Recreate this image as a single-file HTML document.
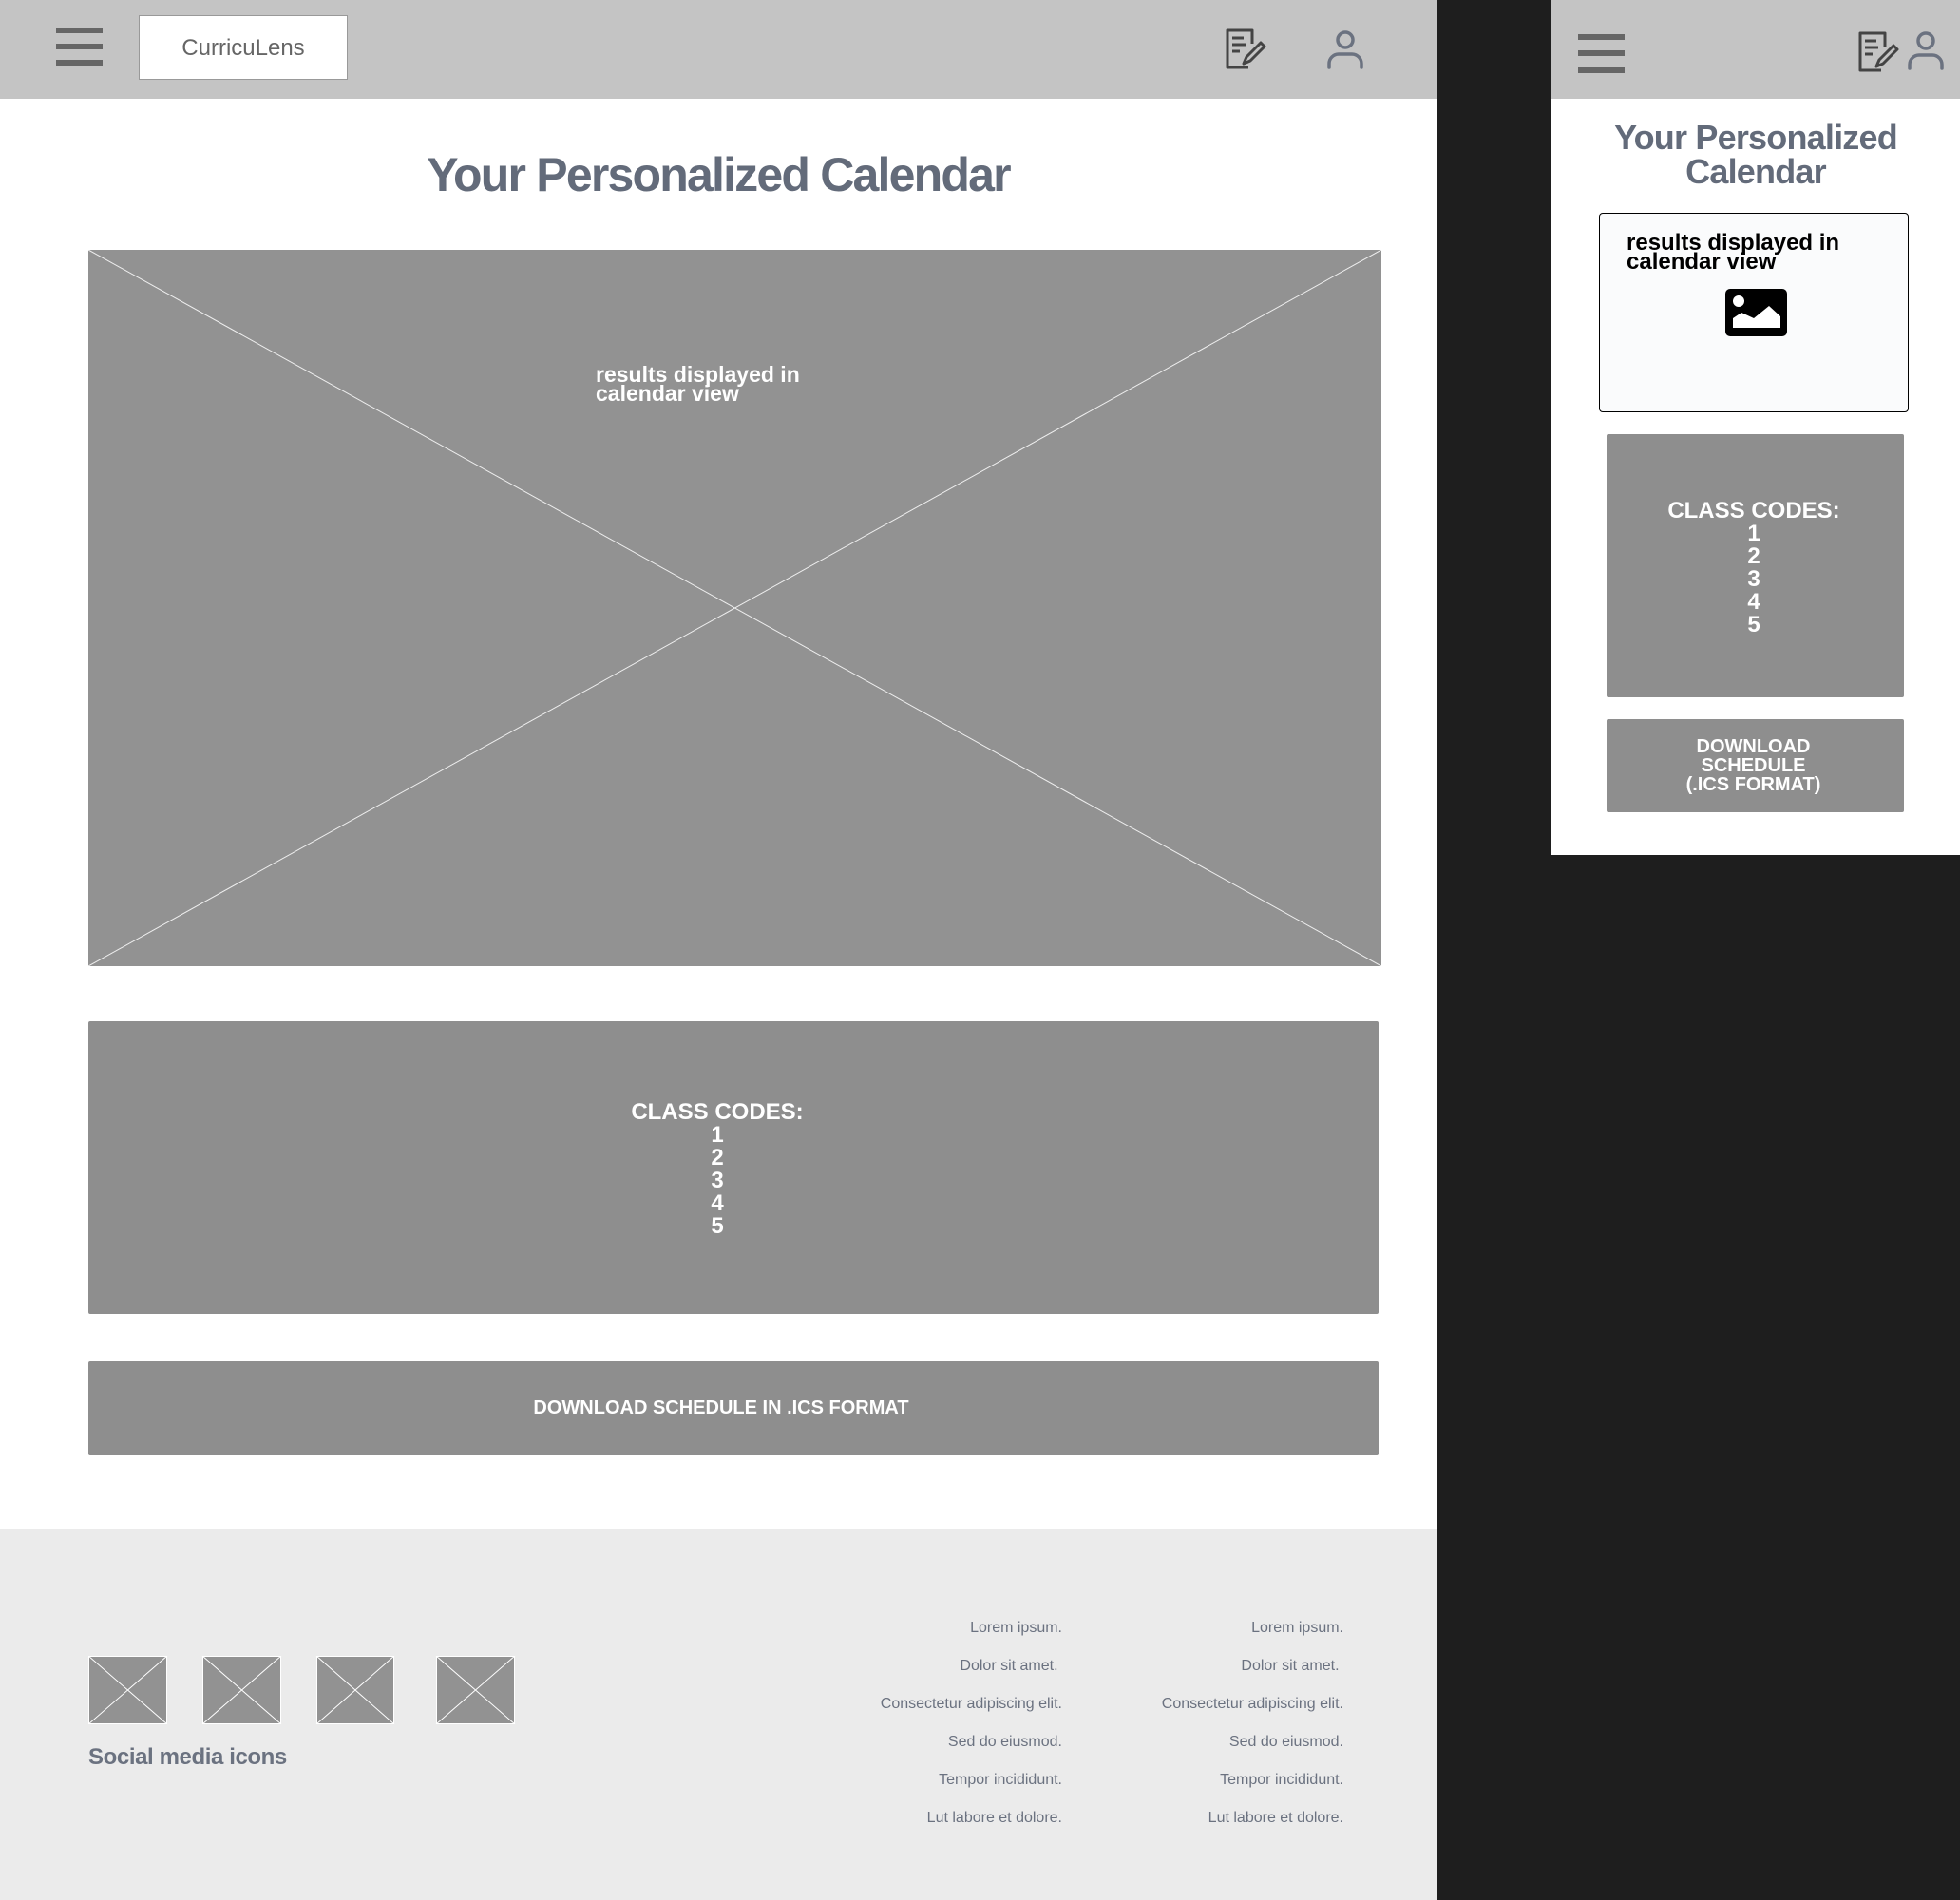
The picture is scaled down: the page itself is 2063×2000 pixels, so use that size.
<!DOCTYPE html>
<html><head><meta charset="utf-8"><style>
*{margin:0;padding:0;box-sizing:border-box}
body{width:2063px;height:2000px;position:relative;background:#1e1e1e;font-family:"Liberation Sans",sans-serif;overflow:hidden}
.a{position:absolute}
.hb span{position:absolute;left:0;width:100%;height:6px;background:#666}
.b{font-weight:bold}
.fl{position:absolute;font-size:16px;color:#6b7280;text-align:right;white-space:nowrap}
</style></head><body>
<div class="a" style="left:0;top:0;width:1512px;height:1609px;background:#fff"></div>
<div class="a" style="left:0;top:0;width:1512px;height:104px;background:#c4c4c4"></div>
<div class="a hb" style="left:59px;top:29px;width:49px;height:40px"><span style="top:0"></span><span style="top:17px"></span><span style="top:34px"></span></div>
<div class="a" style="left:146px;top:16px;width:220px;height:68px;background:#fff;border:1px solid #999;font-size:24px;color:#666;text-align:center;line-height:68px">CurricuLens</div>
<svg class="a" style="left:1287px;top:29px" width="46" height="46" viewBox="0 0 46 46"><path d="M27 42H5V3h26v14" fill="none" stroke="#444" stroke-width="3" stroke-linejoin="round"/><path d="M10 11h12M10 18h14M10 25h8" stroke="#444" stroke-width="3"/><path d="M22 38l3-7 15-15 4 4-15 15z" fill="none" stroke="#444" stroke-width="3" stroke-linejoin="round"/></svg>
<svg class="a" style="left:1396px;top:30px" width="40" height="44" viewBox="0 0 40 44"><circle cx="20" cy="12" r="8" fill="none" stroke="#6b7280" stroke-width="3.5"/><path d="M3 41v-4a10 10 0 0 1 10-10h14a10 10 0 0 1 10 10v4" fill="none" stroke="#6b7280" stroke-width="3.5" stroke-linecap="round"/></svg>
<div class="a b" style="left:0;width:1512px;top:155px;text-align:center;font-size:50px;color:#636b7a;letter-spacing:-1.8px">Your Personalized Calendar</div>
<svg class="a" style="left:93px;top:263px" width="1361" height="754"><rect width="1361" height="754" fill="#929292"/><line x1="0" y1="0" x2="1361" y2="754" stroke="#eee" stroke-width="1"/><line x1="1361" y1="0" x2="0" y2="754" stroke="#eee" stroke-width="1"/></svg>
<div class="a b" style="left:627px;top:384px;font-size:23px;line-height:20px;color:#fff">results displayed in<br>calendar view</div>
<div class="a" style="left:93px;top:1075px;width:1358px;height:308px;background:#8e8e8e;border-radius:2px"></div>
<div class="a b" style="left:93px;width:1324px;top:1159px;text-align:center;font-size:24px;line-height:24px;color:#fff">CLASS CODES:<br>1<br>2<br>3<br>4<br>5</div>
<div class="a b" style="left:93px;top:1433px;width:1358px;height:99px;background:#8e8e8e;border-radius:2px;color:#fff;font-size:20px;line-height:99px;text-align:center;padding-right:26px">DOWNLOAD SCHEDULE IN .ICS FORMAT</div>
<div class="a" style="left:0;top:1609px;width:1512px;height:391px;background:#ebebeb"></div>
<svg class="a" style="left:93px;top:1743px" width="450" height="72">
<g fill="#929292" stroke="#fff" stroke-width="1">
<rect x="0.5" y="0.5" width="82" height="71"/><path d="M0 0L83 72M83 0L0 72"/>
<rect x="120.5" y="0.5" width="82" height="71"/><path d="M120 0L203 72M203 0L120 72"/>
<rect x="240.5" y="0.5" width="81" height="71"/><path d="M240 0L322 72M322 0L240 72"/>
<rect x="366.5" y="0.5" width="82" height="71"/><path d="M366 0L449 72M449 0L366 72"/>
</g></svg>
<div class="a b" style="left:93px;top:1836px;font-size:24px;color:#6b7280;letter-spacing:-0.4px">Social media icons</div>
<div class="fl" style="right:945px;top:1694px;line-height:40px">Lorem ipsum.<br>Dolor sit amet.&nbsp;<br>Consectetur adipiscing elit.<br>Sed do eiusmod.<br>Tempor incididunt.<br>Lut labore et dolore.</div>
<div class="fl" style="right:649px;top:1694px;line-height:40px">Lorem ipsum.<br>Dolor sit amet.&nbsp;<br>Consectetur adipiscing elit.<br>Sed do eiusmod.<br>Tempor incididunt.<br>Lut labore et dolore.</div>
<div class="a" style="left:1633px;top:0;width:430px;height:900px;background:#fff"></div>
<div class="a" style="left:1633px;top:0;width:430px;height:104px;background:#c4c4c4"></div>
<div class="a hb" style="left:1661px;top:36px;width:49px;height:41px"><span style="top:0"></span><span style="top:17px"></span><span style="top:35px"></span></div>
<svg class="a" style="left:1953px;top:32px" width="46" height="46" viewBox="0 0 46 46"><path d="M27 42H5V3h26v14" fill="none" stroke="#444" stroke-width="3" stroke-linejoin="round"/><path d="M10 11h12M10 18h14M10 25h8" stroke="#444" stroke-width="3"/><path d="M22 38l3-7 15-15 4 4-15 15z" fill="none" stroke="#444" stroke-width="3" stroke-linejoin="round"/></svg>
<svg class="a" style="left:2007px;top:32px" width="40" height="44" viewBox="0 0 40 44"><circle cx="20" cy="11" r="8" fill="none" stroke="#6b7280" stroke-width="3.5"/><path d="M3 40v-4a10 10 0 0 1 10-10h14a10 10 0 0 1 10 10v4" fill="none" stroke="#6b7280" stroke-width="3.5" stroke-linecap="round"/></svg>
<div class="a b" style="left:1633px;width:430px;top:127px;text-align:center;font-size:36px;line-height:36px;color:#636b7a;letter-spacing:-0.8px">Your Personalized<br>Calendar</div>
<div class="a" style="left:1683px;top:224px;width:326px;height:210px;background:#fafbfc;border:1.5px solid #000;border-radius:4px"></div>
<div class="a b" style="left:1712px;top:246px;font-size:24px;line-height:20px;color:#000">results displayed in<br>calendar view</div>
<svg class="a" style="left:1816px;top:304px" width="65" height="50" viewBox="0 0 65 50"><rect width="65" height="50" rx="5" fill="#000"/><circle cx="14" cy="13" r="6" fill="#fff"/><path d="M8 41v-10l9-6 13 6 16-13 12 11v12z" fill="#fff"/></svg>
<div class="a" style="left:1691px;top:457px;width:313px;height:277px;background:#8e8e8e;border-radius:2px"></div>
<div class="a b" style="left:1691px;width:310px;top:526px;text-align:center;font-size:24px;line-height:24px;color:#fff">CLASS CODES:<br>1<br>2<br>3<br>4<br>5</div>
<div class="a" style="left:1691px;top:757px;width:313px;height:98px;background:#8e8e8e;border-radius:2px"></div>
<div class="a b" style="left:1689px;width:313px;top:776px;text-align:center;font-size:20px;line-height:20px;color:#fff">DOWNLOAD<br>SCHEDULE<br>(.ICS FORMAT)</div>
</body></html>
